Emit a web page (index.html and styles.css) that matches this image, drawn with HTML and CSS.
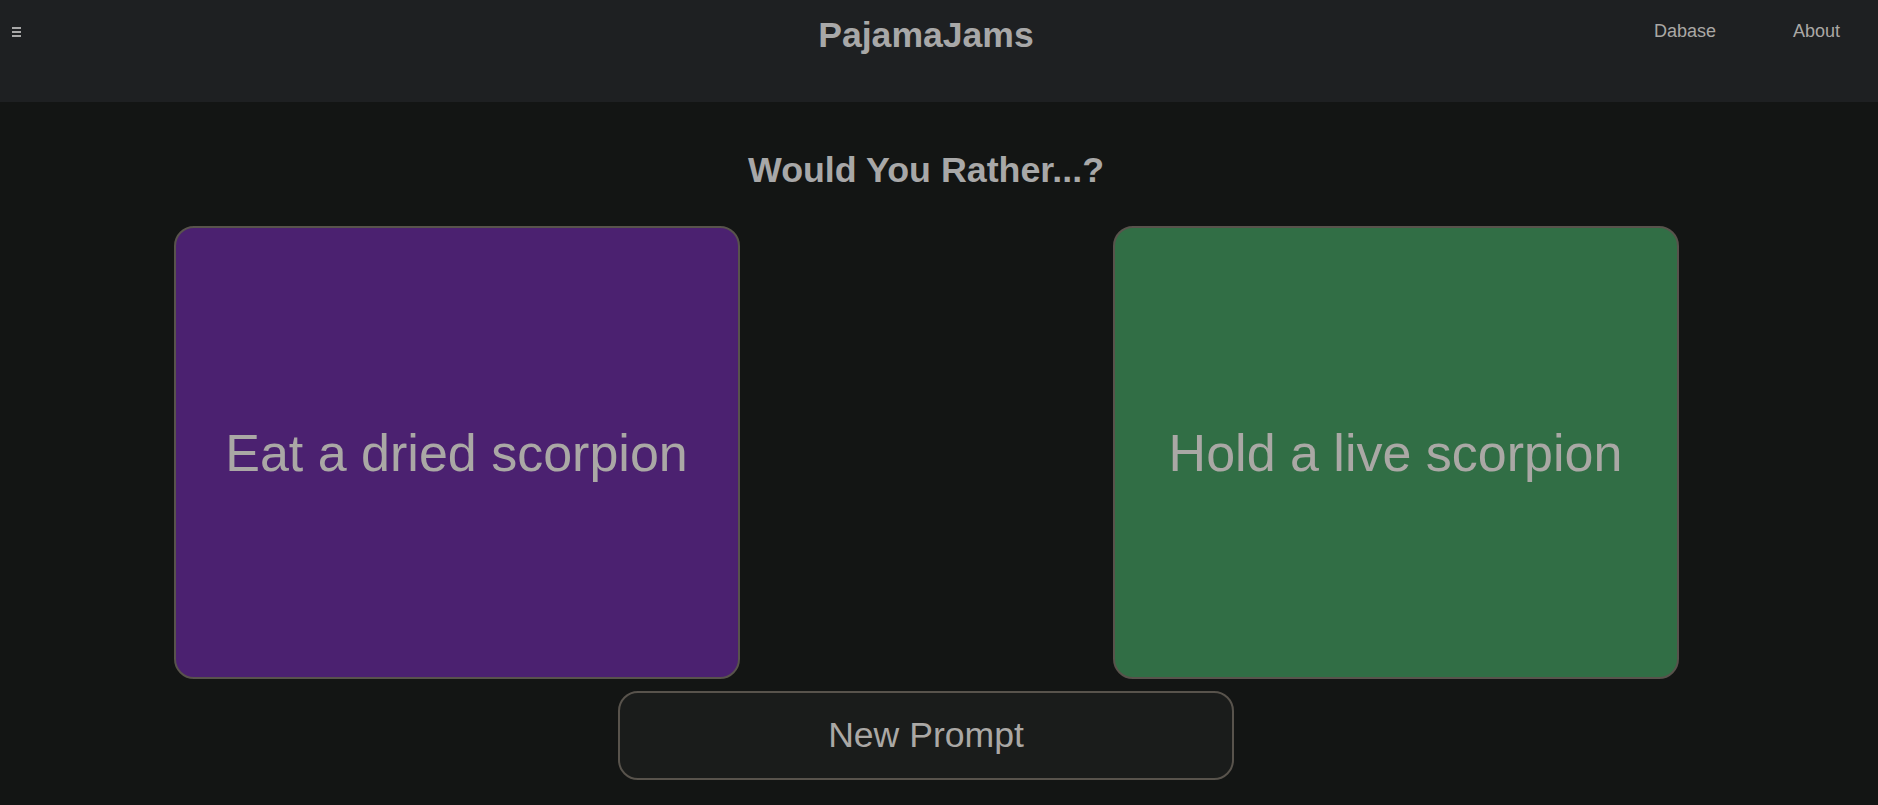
FILE: index.html
```html
<!DOCTYPE html>
<html lang="en">
<head>
<meta charset="utf-8">
<title>PajamaJams</title>
<link rel="stylesheet" href="styles.css">
</head>
<body>
<header class="topbar">
  <button class="menu-btn" aria-label="Menu">
    <span class="bar"></span><span class="bar"></span><span class="bar"></span>
  </button>
  <h1 class="brand">PajamaJams</h1>
  <nav class="nav">
    <a class="nav-link" href="#">Dabase</a>
    <a class="nav-link" href="#">About</a>
  </nav>
</header>
<main class="content">
  <h2 class="question">Would You Rather...?</h2>
  <div class="choices">
    <div class="choice choice-purple">Eat a dried scorpion</div>
    <div class="choice choice-green">Hold a live scorpion</div>
  </div>
  <button class="new-prompt">New Prompt</button>
</main>
</body>
</html>
```

FILE: styles.css
```css
* { box-sizing: border-box; }
html, body {
  margin: 0;
  padding: 0;
  background: #131514;
  font-family: "Liberation Sans", Arial, sans-serif;
  color: #aaa8a5;
}
.topbar {
  height: 102px;
  background: #1e2022;
  display: grid;
  grid-template-columns: 1fr auto 1fr;
  align-items: start;
  padding: 0 38px 0 12px;
}
.menu-btn {
  margin-top: 27px;
  padding: 0;
  border: 0;
  background: transparent;
  display: flex;
  flex-direction: column;
  gap: 2px;
  width: 9px;
  justify-self: start;
}
.bar {
  display: block;
  width: 9px;
  height: 2px;
  background: #a8a8a8;
}
.brand {
  margin: 15px 0 0;
  font-size: 35.6px;
  line-height: 40px;
  font-weight: bold;
  color: #a8a8a8;
}
.nav {
  justify-self: end;
  display: flex;
  gap: 77px;
  margin-top: 18px;
}
.nav-link {
  font-size: 18px;
  line-height: 26px;
  color: #aaa8a5;
  text-decoration: none;
}
.content {
  display: flex;
  flex-direction: column;
  align-items: center;
  padding-right: 26px;
}
.question {
  margin: 48px 0 36px;
  font-size: 35.8px;
  line-height: 40px;
  font-weight: bold;
  color: #a8a8a8;
}
.choices {
  display: flex;
  justify-content: center;
  gap: 373px;
}
.choice {
  width: 566px;
  height: 453px;
  border: 2px solid #58534c;
  border-radius: 20px;
  display: flex;
  align-items: center;
  justify-content: center;
  font-size: 52px;
  color: #aaa8a5;
}
.choice-purple { background: #4b2170; }
.choice-green { background: #316e45; }
.new-prompt {
  margin-top: 12px;
  width: 616px;
  height: 89px;
  border: 2px solid #58534c;
  border-radius: 20px;
  background: #1a1c1b;
  color: #aaa8a5;
  font-family: "Liberation Sans", Arial, sans-serif;
  font-size: 35.6px;
}
```
